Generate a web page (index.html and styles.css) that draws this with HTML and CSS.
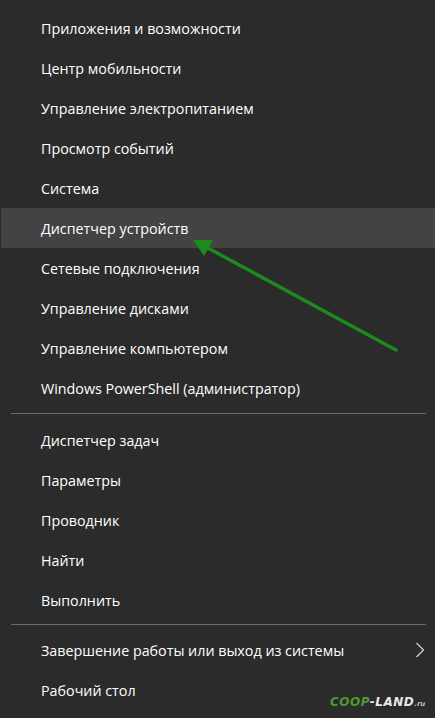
FILE: index.html
```html
<!DOCTYPE html>
<html lang="ru">
<head>
<meta charset="utf-8">
<link rel="stylesheet" href="styles.css">
</head>
<body>
<div class="menu">
  <div class="item">Приложения и возможности</div>
  <div class="item">Центр мобильности</div>
  <div class="item">Управление электропитанием</div>
  <div class="item">Просмотр событий</div>
  <div class="item">Система</div>
  <div class="item active">Диспетчер устройств</div>
  <div class="item">Сетевые подключения</div>
  <div class="item">Управление дисками</div>
  <div class="item">Управление компьютером</div>
  <div class="item">Windows PowerShell (администратор)</div>
  <div class="sep sep1"></div>
  <div class="item">Диспетчер задач</div>
  <div class="item">Параметры</div>
  <div class="item">Проводник</div>
  <div class="item">Найти</div>
  <div class="item">Выполнить</div>
  <div class="sep sep2"></div>
  <div class="item has-sub">Завершение работы или выход из системы
    <svg class="chev" width="10" height="16" viewBox="0 0 10 16"><path d="M1.5 1 L8.5 8 L1.5 15" fill="none" stroke="#cfcfcf" stroke-width="1.3"/></svg>
  </div>
  <div class="item">Рабочий стол</div>
</div>
<svg class="pointer" width="435" height="718" viewBox="0 0 435 718">
  <line x1="396" y1="350" x2="206" y2="247" stroke="#1d8a1d" stroke-width="3.5" stroke-linecap="round"/>
  <polygon points="193,240 213,240 204,256" fill="#1d8a1d"/>
</svg>
<div class="mark"><span class="g">COOP</span><span class="w">-LAND</span><span class="ru">.ru</span></div>
</body>
</html>
```
FILE: styles.css
```css
html, body {
  margin: 0;
  padding: 0;
  background: #2b2b2b;
}
body {
  width: 435px;
  height: 718px;
  overflow: hidden;
  position: relative;
  font-family: "Open Sans", "Noto Sans", sans-serif;
  font-size: 14.3px;
  color: #ffffff;
}
.menu {
  display: flex;
  flex-direction: column;
  padding-top: 8px;
}
.item {
  height: 40px;
  display: flex;
  align-items: center;
  padding-left: 41px;
  padding-right: 10px;
  box-sizing: border-box;
  white-space: nowrap;
}
.item.active {
  background: #434343;
  margin-left: 1px;
  padding-left: 40px;
}
.has-sub {
  justify-content: space-between;
}
.chev {
  display: block;
}
.sep {
  height: 1px;
  background: #6b6b6b;
  margin: 5px 9px 6px 11px;
}
.sep2 {
  margin: 4px 9px 5px 11px;
}
.pointer {
  position: absolute;
  left: 0;
  top: 0;
  pointer-events: none;
}
.mark {
  position: absolute;
  left: 330px;
  top: 695px;
  font-family: "DejaVu Sans", sans-serif;
  font-style: italic;
  font-weight: bold;
  font-size: 12px;
  letter-spacing: 0.5px;
}
.mark .g { color: #4e9a2e; }
.mark .w { color: #e8e8e8; }
.mark .ru { color: #bdbdbd; font-size: 7px; letter-spacing: 0; }
```
